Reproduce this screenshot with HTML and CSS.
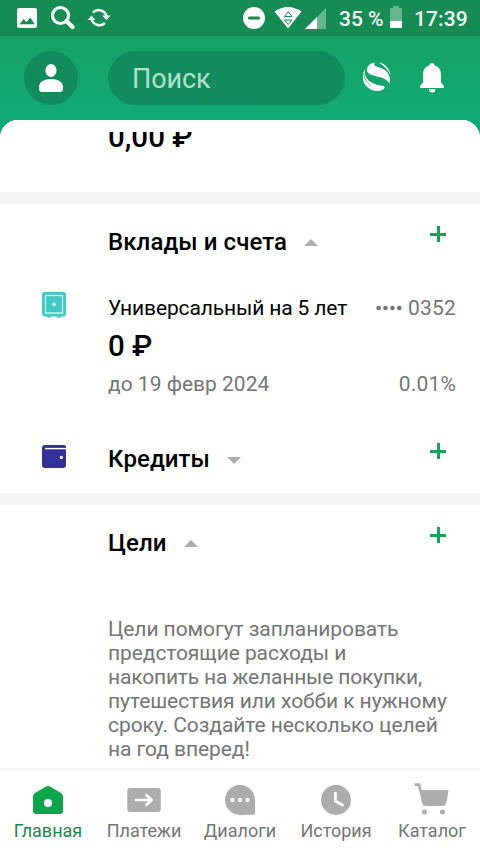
FILE: index.html
```html
<!DOCTYPE html>
<html lang="ru">
<head>
<meta charset="utf-8">
<title>Главная</title>
<link rel="stylesheet" href="styles.css">
</head>
<body>
<div class="app">
  <header class="top">
    <div class="status">
      <svg class="status-left" width="110" height="36" viewBox="0 0 110 36">
        <rect x="17" y="8" width="20" height="20" rx="2" fill="#fff"/>
        <path d="M19.500 24.300l4.200-5.300 2.700 3.200 3.800-4.700 4.600 6.800z" fill="#168c54"/>
        <circle cx="60.500" cy="15.500" r="8" fill="none" stroke="#f4fff8" stroke-width="3.200"/>
        <path d="M66.500 21l6 6" stroke="#f4fff8" stroke-width="4.400" stroke-linecap="round"/>
        <g fill="none" stroke="#f4fff8" stroke-width="2.500">
          <path d="M93 12.500a8 8 0 0 1 13.500 4"/>
          <path d="M105 23a8 8 0 0 1-13.500-5"/>
        </g>
        <path d="M102 15.500h8.500l-4 4.600zM87.500 20h8l-4-4.600z" fill="#f4fff8"/>
      </svg>
      <div class="status-right">
        <svg width="86" height="36" viewBox="0 0 86 36">
          <circle cx="11" cy="18" r="11" fill="#fff"/>
          <path d="M6.500 18h9" stroke="#168c54" stroke-width="3.200" stroke-linecap="round"/>
          <path d="M31.500 11.500Q45 2.500 58.500 11.500L45 28.500z" fill="#fff"/>
          <path d="M41.500 16.500l3.700-4.800 3.700 4.800zM41.500 20h7.400l-3.700 4.500z" fill="#fff" stroke="#168c54"/>
          <path d="M62 29L83 8v21z" fill="#66b58d"/>
          <path d="M62 29L74 17v12z" fill="#fff"/>
        </svg>
        <span class="percent">35 %</span>
        <svg class="battery" width="12" height="36" viewBox="0 0 12 36">
          <path d="M0 8h3V6h6v2h3v20H0z" fill="#66b58d"/><path d="M0 21h12v7H0z" fill="#fff"/>
        </svg>
        <span class="clock">17:39</span>
      </div>
    </div>
    <div class="bar">
      <div class="avatar">
        <svg width="24" height="30" viewBox="0 0 24 30"><ellipse cx="12" cy="7.500" rx="5.600" ry="6.500" fill="#fff"/><path d="M0 24c0-5 5-8 12-8s12 3 12 8v1.500Q24 29 21 29H3Q0 29 0 25.500z" fill="#fff"/></svg>
      </div>
      <div class="search">Поиск</div>
      <svg class="logo" width="30" height="32" viewBox="0 0 30 32" fill="#fff">
        <path d="M6 8C6.500 4.500 10 1.500 14.500 1.800 13 2.500 12.500 3.500 14 4.700c2 1.400 7 2 10.500 4.800 4 3.300 5.200 8.500 4 13C26 18 22 16.800 16 15.400 10 14.200 5.500 12.500 6 8z"/>
        <path d="M4.500 7.500C2.500 13 5 18.500 11 21.800c3.500 2 8 2.700 11 3 2.500.4 2 2.800-.5 4-2.500 1.600-7 1.700-10.500.2C3.500 26.500-1.500 16 4.500 7.500z"/>
        <path d="M18 1.500c6 1 11 6.500 11.500 12.500-2-4.500-5.500-8.500-11.500-12.500z"/>
        <path d="M1 13c0 5.500 2.500 9.500 7 13" fill="none" stroke="#14a56d" stroke-width=".7" transform="translate(2 -1)"/>
      </svg>
      <svg class="bell" width="24" height="30" viewBox="0 0 24 30" fill="#fff"><path d="M12 0c2 0 2.500 1.200 2.500 2.600C19 4 21 7 21 12v7.500l3 3.500v2H0v-2l3-3.500V12C3 7 5 4 9.500 2.600 9.500 1.200 10 0 12 0zM9 26.200h6.400a3.200 3.200 0 0 1-6.400 0z"/></svg>
    </div>
  </header>
  <main class="sheet">
    <section class="summary"><div class="clip"><div class="amount">0,00 ₽</div></div></section>
    <section class="card accounts">
      <div class="head"><h2>Вклады и счета</h2><i class="arrow up"></i><i class="plus"></i></div>
      <div class="account">
        <svg class="safe" width="24" height="26" viewBox="0 0 24 26"><path d="M4 23h5v2.600H5.500zM15 23h5l-1 2.600h-4z" fill="#40c8c4"/><rect width="24" height="24.500" rx="3" fill="#40c8c4"/><rect x="3.500" y="3.500" width="17" height="17.500" fill="none" stroke="#d9fffb" stroke-width="1.300"/><circle cx="12" cy="12.300" r="1.800" fill="#e8fffc"/></svg>
        <div class="details">
          <div class="line"><span class="name">Универсальный на 5 лет</span><span class="number"><svg width="26" height="6" viewBox="0 0 26 6" fill="#757575"><circle cx="2.600" cy="3" r="2.300"/><circle cx="9.500" cy="3" r="2.300"/><circle cx="16.400" cy="3" r="2.300"/><circle cx="23.300" cy="3" r="2.300"/></svg><span class="digits">0352</span></span></div>
          <div class="amount">0 ₽</div>
          <div class="line muted"><span class="date">до 19 февр 2024</span><span class="rate">0.01%</span></div>
        </div>
      </div>
      <div class="head credits">
        <svg class="wallet" width="24" height="23" viewBox="0 0 24 23"><path d="M3 0h19q2 0 2 2v18q0 3-3 3H3q-3 0-3-3V3q0-3 3-3z" fill="#34309a"/><path d="M3 3.600h21" stroke="#fff" stroke-width="1.400"/><circle cx="19.400" cy="12.400" r="1.600" fill="#fff"/></svg>
        <h2>Кредиты</h2><i class="arrow down"></i><i class="plus"></i>
      </div>
    </section>
    <section class="card goals">
      <div class="head"><h2>Цели</h2><i class="arrow up"></i><i class="plus"></i></div>
      <p>Цели помогут запланировать<br>предстоящие расходы и<br><span class="tight">накопить на желанные покупки,</span><br>путешествия или хобби к нужному<br>сроку. Создайте несколько целей<br>на год вперед!</p>
    </section>
  </main>
  <nav class="tabs">
    <a class="tab active"><svg width="36" height="34" viewBox="0 0 36 34"><path d="M18 3q1 0 2 .6L31 10q2 1.200 2 3.500V28q0 3-3 3H6q-3 0-3-3V13.500Q3 11.200 5 10L16 3.600Q17 3 18 3z" fill="#0ca54c"/><circle cx="18" cy="20" r="4" fill="#fff"/></svg><span>Главная</span></a>
    <a class="tab"><svg width="36" height="34" viewBox="0 0 36 34"><rect x="1.300" y="5" width="33.500" height="24" rx="3" fill="#adadad"/><path d="M10 17h15M20.500 12.200l5 4.800-5 4.800" fill="none" stroke="#fff" stroke-width="2.700" stroke-linecap="round" stroke-linejoin="round"/></svg><span>Платежи</span></a>
    <a class="tab"><svg width="36" height="34" viewBox="0 0 36 34"><path d="M18 2a15 15 0 0 1 15 15v14.500q-3 0-9 0.200Q21 32 18 32a15 15 0 0 1 0-30z" fill="#adadad"/><g fill="#fff"><circle cx="10.500" cy="17" r="2.200"/><circle cx="18" cy="17" r="2.200"/><circle cx="25.500" cy="17" r="2.200"/></g></svg><span>Диалоги</span></a>
    <a class="tab"><svg width="36" height="34" viewBox="0 0 36 34"><circle cx="18" cy="17" r="15" fill="#adadad"/><path d="M17.500 10v8.300l7 3.700" fill="none" stroke="#fff" stroke-width="2.700" stroke-linecap="round"/></svg><span>История</span></a>
    <a class="tab"><svg width="36" height="34" viewBox="0 0 36 34"><path d="M.5 1.600H5L9.500 20" fill="none" stroke="#adadad" stroke-width="2.600"/><path d="M6 7h27.500q1.200 0 1 1.500l-2.500 12Q31.500 23 29 23H11.500q-2.600 0-3-2.500z" fill="#adadad"/><circle cx="10.500" cy="29" r="2.500" fill="#adadad"/><circle cx="28.500" cy="29" r="2.500" fill="#adadad"/></svg><span>Каталог</span></a>
  </nav>
</div>
</body>
</html>
```
FILE: styles.css
```css
* { box-sizing: border-box; }
body { margin: 0; font-family: Roboto, "Noto Sans", sans-serif; color: #000; }
svg { display: block; flex: none; }
.app { width: 480px; height: 854px; display: flex; flex-direction: column; overflow: hidden; background: #11a976; }
.top { height: 120px; background: linear-gradient(#16a164 30%, #11aa76); }
.status { height: 36px; display: flex; justify-content: space-between; background: #168c54; }
.status-left { overflow: visible; }
.status-right { display: flex; width: 237px; color: #f4fff8; font-size: 21px; font-weight: 500; line-height: 38px; white-space: nowrap; }
.percent { width: 51px; margin-left: 10px; }
.clock { margin-left: 12px; letter-spacing: .1px; }
.bar { height: 84px; display: flex; align-items: center; padding-left: 24px; }
.avatar { width: 54px; height: 54px; border-radius: 50%; background: #128c5f; display: flex; align-items: center; justify-content: center; }
.search { width: 237px; height: 54px; margin-left: 30px; padding-left: 24px; border-radius: 27px; background: #128c5f; color: #b3e1cb; font-size: 27px; line-height: 56px; letter-spacing: -.1px; }
.logo { margin: -2px 0 0 16px; }
.bell { margin-left: 29px; }
.sheet { height: 648px; flex: none; background: #f4f4f4; border-radius: 18px 18px 0 0; overflow: hidden; }
.summary { height: 72px; padding: 12px 0 0 108px; background: #fff; }
.clip { height: 40px; overflow: hidden; }
.clip .amount { margin-top: -13px; }
.amount { font-size: 29.500px; font-weight: 500; line-height: 36px; }
.card { margin-top: 12px; background: #fff; }
.accounts { height: 289px; padding-top: 16px; }
.head { height: 44px; padding: 6px 34px 0 108px; display: flex; align-items: flex-start; }
h2 { margin: 0; font-size: 24px; font-weight: 500; line-height: 32px; letter-spacing: .08px; }
.arrow { margin: 13px 0 0 17px; border: 7px solid transparent; border-top: 0; border-bottom: 7px solid #adadad; }
.arrow.down { border-top: 7px solid #adadad; border-bottom: 0; margin-top: 14px; }
.plus { width: 16px; height: 16px; margin: 0 0 0 auto; background: linear-gradient(#15a456, #15a456) center / 16px 3px no-repeat, linear-gradient(#15a456, #15a456) center / 3px 16px no-repeat; }
.account { height: 145px; display: flex; padding: 28px 24px 0 42px; }
.details { flex: 1; margin: 4px 0 0 42px; }
.line { display: flex; justify-content: space-between; font-size: 21px; line-height: 24px; }
.name { letter-spacing: -.13px; }
.number { display: flex; align-items: center; gap: 6px; color: #757575; }
.digits, .rate { letter-spacing: .2px; }
.details .amount { margin: 8px 0; }
.muted { color: #757575; }
.credits { height: 50px; margin-top: 28px; padding-left: 42px; }
.wallet { margin: 2px 42px 0 0; }
.goals { height: 263px; padding-top: 16px; }
.goals p { margin: 52px 0 0 108px; font-size: 21px; line-height: 24px; color: #757575; white-space: nowrap; letter-spacing: -.07px; }
.tight { letter-spacing: -.17px; }
.tabs { height: 86px; flex: none; display: flex; background: #fff; border-top: 2px solid #f3f3f3; }
.tab { flex: 1; display: flex; flex-direction: column; align-items: center; padding-top: 13px; font-size: 18px; line-height: 20px; color: #757575; gap: 4px; }
.tab.active { color: #15894d; }
```
